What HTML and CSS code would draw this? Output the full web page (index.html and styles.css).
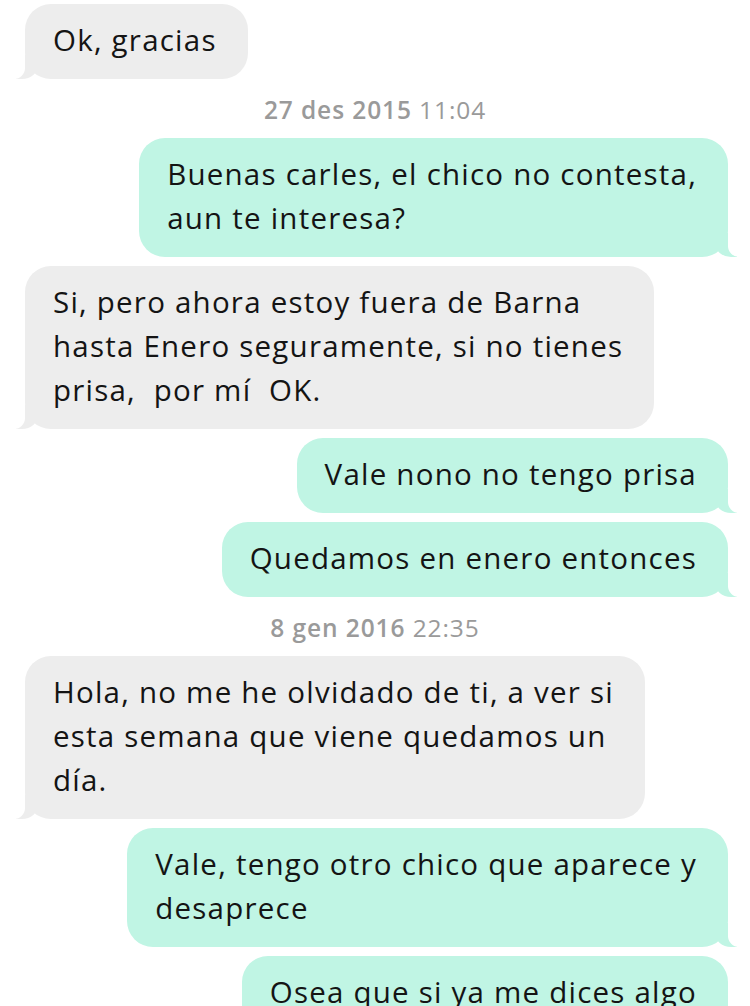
FILE: index.html
```html
<!DOCTYPE html>
<html lang="es">
<head>
<meta charset="utf-8">
<title>Mensajes</title>
<link rel="stylesheet" href="styles.css">
</head>
<body>
<div class="thread">
  <div class="bubble them">Ok, gracias</div>
  <div class="stamp"><b>27 des 2015</b> 11:04</div>
  <div class="bubble me">Buenas carles, el chico no contesta,<br>aun te interesa?</div>
  <div class="bubble them">Si, pero ahora estoy fuera de Barna<br>hasta Enero seguramente, si no tienes<br>prisa,&nbsp; por mí&nbsp; OK.</div>
  <div class="bubble me">Vale nono no tengo prisa</div>
  <div class="bubble me">Quedamos en enero entonces</div>
  <div class="stamp"><b>8 gen 2016</b> 22:35</div>
  <div class="bubble them">Hola, no me he olvidado de ti, a ver si<br>esta semana que viene quedamos un<br>día.</div>
  <div class="bubble me">Vale, tengo otro chico que aparece y<br>desaprece</div>
  <div class="bubble me">Osea que si ya me dices algo</div>
</div>
</body>
</html>
```
FILE: styles.css
```css
html, body {
  margin: 0;
  padding: 0;
  background: #ffffff;
}
body {
  width: 750px;
  height: 1006px;
  overflow: hidden;
  font-family: "Open Sans", "Noto Sans", sans-serif;
  font-variant-ligatures: none;
}
.thread {
  display: flex;
  flex-direction: column;
  gap: 9px;
  padding-top: 4px;
}
.bubble {
  position: relative;
  box-sizing: border-box;
  font-size: 29.5px;
  letter-spacing: 1.22px;
  line-height: 44px;
  color: #141414;
  padding: 14px 31px 17px 28px;
  border-radius: 26px;
  white-space: nowrap;
}
.them {
  align-self: flex-start;
  margin-left: 25px;
  background: #ededed;
}
.me {
  align-self: flex-end;
  margin-right: 22px;
  background: #c0f5e4;
}
.bubble::before,
.bubble::after {
  content: "";
  position: absolute;
  bottom: 0;
  height: 24px;
}
.them::before {
  left: -9px;
  width: 22px;
  background: #ededed;
  border-bottom-right-radius: 16px 14px;
}
.them::after {
  left: -26px;
  width: 26px;
  background: #ffffff;
  border-bottom-right-radius: 11px;
}
.me::before {
  right: -9px;
  width: 22px;
  background: #c0f5e4;
  border-bottom-left-radius: 16px 14px;
}
.me::after {
  right: -26px;
  width: 26px;
  background: #ffffff;
  border-bottom-left-radius: 11px;
}
.stamp {
  align-self: center;
  font-size: 24.5px;
  line-height: 28px;
  letter-spacing: 0.9px;
  color: #9a9a9a;
  margin: 8px 0 5px;
}
.stamp b {
  font-weight: 600;
}
```
